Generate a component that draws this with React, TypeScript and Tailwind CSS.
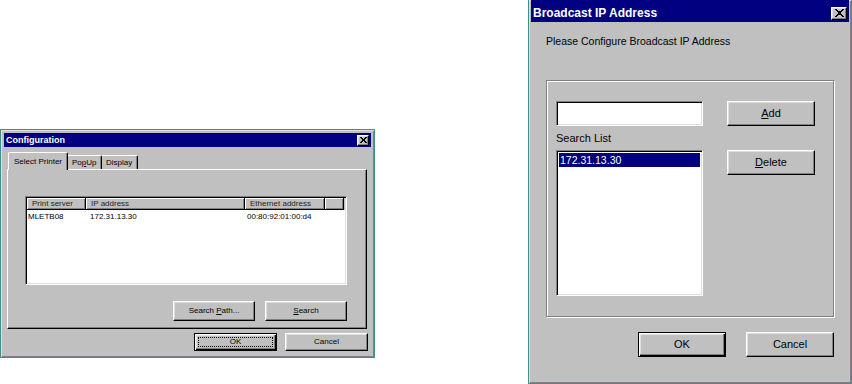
import React from 'react';

const raised =
  'bg-[#c0c0c0] border border-t-white border-l-white border-r-black border-b-black shadow-[inset_-1px_-1px_#808080,inset_1px_1px_#dfdfdf]';
const defaultBtn =
  'bg-[#c0c0c0] border border-black shadow-[inset_1px_1px_#fff,inset_-1px_-1px_#000,inset_-2px_-2px_#808080,inset_2px_2px_#dfdfdf]';
const sunken =
  'bg-white border border-t-[#808080] border-l-[#808080] border-b-white border-r-white shadow-[inset_1px_1px_#000,inset_-1px_-1px_#dfdfdf]';
const frame =
  'bg-[#c0c0c0] border-[#3f8f8f] shadow-[inset_1px_1px_#dfdfdf,inset_-1px_-1px_#808080]';

const closeGlyph = [
  '11....11',
  '.11..11.',
  '..1111..',
  '...11...',
  '..1111..',
  '.11..11.',
  '11....11',
];

function CloseX({ w, h }: { w: number; h: number }) {
  return (
    <svg width={w} height={h} viewBox="0 0 8 7" shapeRendering="crispEdges">
      {closeGlyph.map((row, y) =>
        row.split('').map((c, x) => (c === '1' ? <rect key={`${x}-${y}`} x={x} y={y} width={1} height={1} fill="#000" /> : null))
      )}
    </svg>
  );
}

function ConfigDialog() {
  const cols = [
    { label: 'Print server', w: 'w-[59px]' },
    { label: 'IP address', w: 'w-[159px]' },
    { label: 'Ethernet address', w: 'w-[80px]' },
    { label: '', w: 'w-[19px]' },
  ];

  return (
    <div className={`mt-[129px] w-[375px] h-[229px] border p-[3px] flex flex-col text-[8px] text-black ${frame}`}>
      {/* Title bar */}
      <div className="h-[14px] bg-[#000080] flex items-center justify-between pl-[2px] pr-[2px]">
        <span className="text-white font-bold text-[9px] leading-none">Configuration</span>
        <div className={`w-[12px] h-[11px] flex items-center justify-center ${raised}`}>
          <CloseX w={7} h={6} />
        </div>
      </div>

      {/* Tabs */}
      <div className="mt-[5px] ml-[4px] flex items-end h-[17px] relative z-10">
        <div className="h-[18px] w-[60px] -mb-px bg-[#c0c0c0] border-t border-l border-t-white border-l-white border-r border-r-black shadow-[inset_-1px_0_#808080] pl-[5px] pt-[3px] rounded-t-[2px] leading-[12px]">
          Select Printer
        </div>
        <div className="h-[14px] w-[34px] bg-[#c0c0c0] border-t border-t-white border-r border-r-black shadow-[inset_-1px_0_#808080] pl-[4px] pt-[1px] leading-[12px] rounded-tr-[2px]">
          Po<span className="underline">p</span>Up
        </div>
        <div className="h-[14px] w-[36px] bg-[#c0c0c0] border-t border-t-white border-r border-r-black shadow-[inset_-1px_0_#808080] pl-[4px] pt-[1px] leading-[12px] rounded-tr-[2px]">
          Display
        </div>
      </div>

      {/* Panel */}
      <div className="ml-[3px] w-[360px] h-[160px] border border-t-white border-l-white border-r-black border-b-black shadow-[inset_-1px_-1px_#808080] pl-[17px] pt-[26px] flex flex-col">
        <div className={`w-[322px] h-[89px] ${sunken} p-[1px] flex flex-col`}>
          <div className="flex h-[12px] bg-[#c0c0c0]">
            {cols.map((c, i) => (
              <div
                key={i}
                className={`${c.w} h-[12px] border-r border-b border-r-black border-b-black shadow-[inset_1px_1px_#fff,inset_-1px_-1px_#808080] pl-[5px] leading-[11px] text-[#222]`}
              >
                {c.label}
              </div>
            ))}
          </div>
          <div className="flex h-[12px] leading-[12px] mt-[1px]">
            <div className="w-[59px] pl-[1px]">MLETB08</div>
            <div className="w-[159px] pl-[4px]">172.31.13.30</div>
            <div className="w-[80px] pl-[2px]">00:80:92:01:00:d4</div>
          </div>
        </div>
        <div className="mt-[16px] w-[322px] flex justify-end gap-[10px]">
          <button className={`w-[82px] h-[20px] ${raised} leading-none`}>
            Search <span className="underline">P</span>ath...
          </button>
          <button className={`w-[82px] h-[20px] ${raised} leading-none`}>
            <span className="underline">S</span>earch
          </button>
        </div>
      </div>

      {/* OK / Cancel */}
      <div className="mt-[4px] mr-[3px] flex justify-end gap-[8px]">
        <button className={`w-[83px] h-[18px] ${defaultBtn} p-[3px]`}>
          <div className="w-full h-full border border-dotted border-black flex items-center justify-center leading-none">
            OK
          </div>
        </button>
        <button className={`w-[83px] h-[18px] ${raised} leading-none`}>Cancel</button>
      </div>
    </div>
  );
}

function BroadcastDialog() {
  return (
    <div className={`ml-[153px] w-[324px] h-[384px] border-x border-b px-[2px] pb-[2px] flex flex-col text-[11px] text-black ${frame}`}>
      {/* Title bar */}
      <div className="h-[22px] bg-[#000080] flex items-center justify-between pt-[4px] pl-[2px] pr-[2px]">
        <span className="text-white font-bold text-[12px] leading-none">Broadcast IP Address</span>
        <div className={`w-[16px] h-[13px] flex items-center justify-center ${raised}`}>
          <CloseX w={9} h={8} />
        </div>
      </div>

      <div className="pl-[15px] pr-[15px] flex flex-col">
        <p className="mt-[12px] leading-[14px] text-[10.5px]">Please Configure Broadcast IP Address</p>

        {/* Group box */}
        <div className="mt-[32px] h-[237px] border border-[#808080] shadow-[1px_1px_#fff,inset_1px_1px_#fff] pt-[20px] pl-[9px] flex">
          <div className="w-[147px] flex flex-col">
            <div className={`h-[25px] ${sunken}`} />
            <div className="mt-[5px] leading-[14px]">Search List</div>
            <div className={`mt-[5px] h-[146px] ${sunken} p-[2px]`}>
              <div className="h-[14px] bg-[#000080] text-white leading-[14px] pl-[1px] text-[10.5px]">172.31.13.30</div>
            </div>
          </div>
          <div className="ml-[24px] flex flex-col">
            <button className={`w-[88px] h-[25px] ${raised}`}>
              <span className="underline">A</span>dd
            </button>
            <button className={`mt-[24px] w-[88px] h-[25px] ${raised}`}>
              <span className="underline">D</span>elete
            </button>
          </div>
        </div>

        {/* Buttons */}
        <div className="mt-[15px] flex justify-end gap-[20px]">
          <button className={`w-[88px] h-[25px] ${defaultBtn}`}>OK</button>
          <button className={`w-[88px] h-[25px] ${raised}`}>Cancel</button>
        </div>
      </div>
    </div>
  );
}

export default function App() {
  return (
    <div className="w-[852px] h-[384px] bg-white flex items-start overflow-hidden font-['Liberation_Sans',Arial,sans-serif]">
      <ConfigDialog />
      <BroadcastDialog />
    </div>
  );
}
